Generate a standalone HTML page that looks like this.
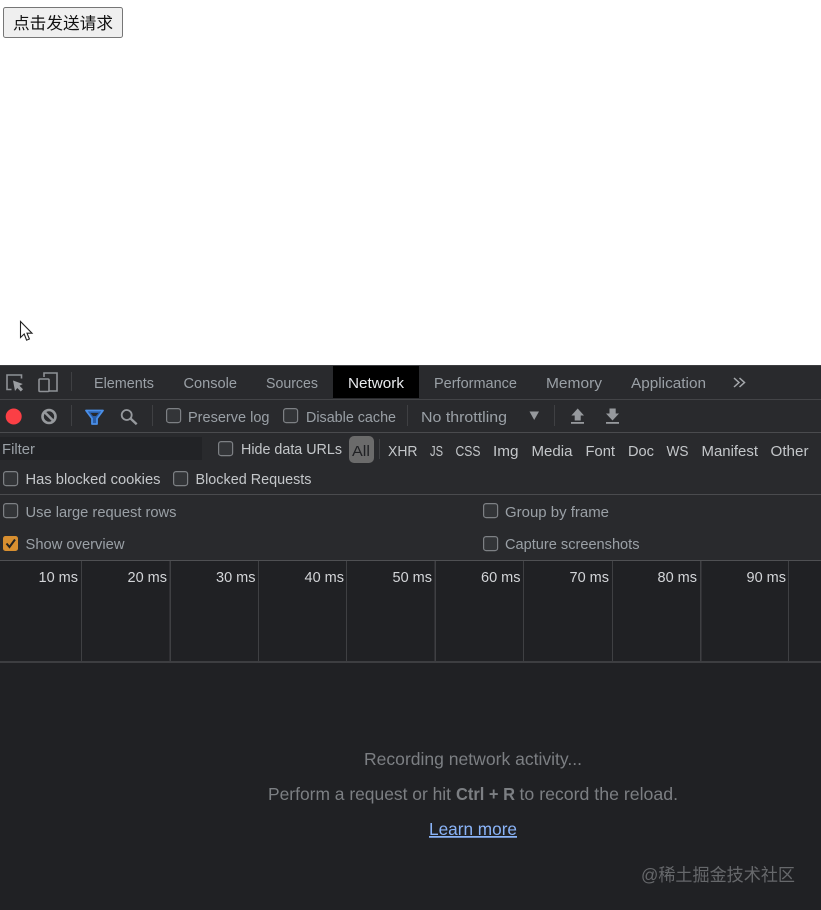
<!DOCTYPE html>
<html lang="zh">
<head>
<meta charset="utf-8">
<title>Network</title>
<style>
html,body{margin:0;padding:0;width:821px;height:910px;overflow:hidden;background:#fff}
svg{position:absolute;left:0;top:0;display:block}
text{font-family:"Liberation Sans","Noto Sans CJK SC",sans-serif;font-size:14.5px}
.t{fill:#9aa0a6}
.l{fill:#c4c7ca}
.s{fill:#b9bcbf}
.b{font-size:17.5px;fill:#7c7f83}
.cb{fill:#333538;stroke:#7d8084;stroke-width:1.2}
</style>
</head>
<body>
<svg width="821" height="910" viewBox="0 0 821 910" xmlns="http://www.w3.org/2000/svg">
<!-- Button -->
<rect x="3.5" y="7.5" width="119" height="30" rx="2" fill="#efefef" stroke="#767676"/>
<text x="13" y="29" textLength="100" lengthAdjust="spacingAndGlyphs" style="font-size:16.6px" fill="#111">点击发送请求</text>
<!-- Cursor -->
<path d="M20.5 321.5V337.5L24.2 334L26.6 340.2L29.4 339L27 333.2H32Z" fill="#fff" stroke="#222" stroke-width="1.1"/>

<!-- Panel -->
<rect x="0" y="365" width="821" height="545" fill="#292a2d"/>
<rect x="0" y="365" width="821" height="1" fill="#3c3d40"/>
<rect x="0" y="399" width="821" height="1" fill="#434447"/>
<rect x="0" y="432" width="821" height="1" fill="#4a4b4e"/>
<rect x="0" y="494" width="821" height="1" fill="#4a4b4e"/>
<rect x="0" y="560" width="821" height="1" fill="#4f5053"/>

<!-- Tab bar icons -->
<path d="M21.500 378.500V375H7V389.500H11.500" fill="none" stroke="#8e9196" stroke-width="1.600"/>
<path d="M13 380.500L15 391L17.300 388L20.800 391.500L23 389.300L19.500 385.800L22.800 384Z" fill="#9a9da1"/>
<path d="M44 377V373H57V391H49" fill="none" stroke="#8e9196" stroke-width="1.600"/>
<rect x="39" y="379" width="10" height="12.500" rx="1" fill="none" stroke="#8e9196" stroke-width="1.600"/>
<rect x="71" y="372" width="1" height="19" fill="#3f4043"/>

<!-- Tabs -->
<rect x="333" y="366" width="86" height="32" fill="#000"/>
<text class="t" x="94" y="388" textLength="60" lengthAdjust="spacingAndGlyphs">Elements</text>
<text class="t" x="183.500" y="388" textLength="53.500" lengthAdjust="spacingAndGlyphs">Console</text>
<text class="t" x="266" y="388" textLength="52" lengthAdjust="spacingAndGlyphs">Sources</text>
<text x="348" y="388" textLength="56" lengthAdjust="spacingAndGlyphs" fill="#e8eaed">Network</text>
<text class="t" x="434" y="388" textLength="83" lengthAdjust="spacingAndGlyphs">Performance</text>
<text class="t" x="546" y="388" textLength="56" lengthAdjust="spacingAndGlyphs">Memory</text>
<text class="t" x="631" y="388" textLength="75" lengthAdjust="spacingAndGlyphs">Application</text>
<path d="M734 378L739 382.500L734 387M739.500 378L744.500 382.500L739.500 387" fill="none" stroke="#a5a8ac" stroke-width="1.500"/>

<!-- Toolbar -->
<circle cx="13.700" cy="416.500" r="8" fill="#fb3f45"/>
<circle cx="49" cy="416.500" r="6.500" fill="none" stroke="#96999d" stroke-width="2.600"/>
<path d="M44.500 412L53.500 421" stroke="#96999d" stroke-width="2.600"/>
<rect x="71" y="405" width="1" height="21" fill="#3f4043"/>
<path d="M86 410.500H103L97 418.500V424H92V418.500Z" fill="#2a5ea8" stroke="#4a8fe8" stroke-width="1.800" stroke-linejoin="round"/>
<path d="M90.500 413H98.500L96 416H93Z" fill="#292a2d"/>
<circle cx="126.700" cy="415" r="5" fill="none" stroke="#96999d" stroke-width="1.800"/>
<path d="M130.500 418.500L136.700 424.300" stroke="#96999d" stroke-width="2.400"/>
<rect x="152" y="405" width="1" height="21" fill="#3f4043"/>
<rect class="cb" x="166.600" y="408.600" width="14" height="14" rx="2.500"/>
<text class="t" x="188" y="422" textLength="81.500" lengthAdjust="spacingAndGlyphs">Preserve log</text>
<rect class="cb" x="283.600" y="408.600" width="14" height="14" rx="2.500"/>
<text class="t" x="306" y="422" textLength="90" lengthAdjust="spacingAndGlyphs">Disable cache</text>
<rect x="407" y="405" width="1" height="21" fill="#3f4043"/>
<text class="t" x="421" y="422" textLength="86" lengthAdjust="spacingAndGlyphs">No throttling</text>
<path d="M529.500 411.500H539L534.200 420Z" fill="#96999d"/>
<rect x="554" y="405" width="1" height="21" fill="#3f4043"/>
<path d="M577.700 408.500L584 415.500H580.700V420.500H574.700V415.500H571.400Z" fill="#96999d"/>
<rect x="571" y="422" width="13" height="1.800" fill="#96999d"/>
<path d="M612.500 420.500L619 413.500H615.700V408.500H609.500V413.500H606Z" fill="#96999d"/>
<rect x="606" y="422" width="13" height="1.800" fill="#96999d"/>

<!-- Filter row -->
<rect x="0" y="437" width="202" height="23" fill="#222326"/>
<text class="t" x="2" y="454" textLength="33" lengthAdjust="spacingAndGlyphs">Filter</text>
<rect class="cb" x="218.600" y="441.600" width="14" height="14" rx="2.500"/>
<text class="l" x="241" y="454" textLength="101" lengthAdjust="spacingAndGlyphs">Hide data URLs</text>
<rect x="349" y="436" width="25" height="27" rx="5" fill="#6b6b6b"/>
<text x="352" y="456" textLength="18" lengthAdjust="spacingAndGlyphs" fill="#202124">All</text>
<rect x="379" y="439" width="1" height="20" fill="#3f4043"/>
<text class="l" x="388" y="456" textLength="29.500" lengthAdjust="spacingAndGlyphs">XHR</text>
<text class="l" x="430" y="456" textLength="13" lengthAdjust="spacingAndGlyphs">JS</text>
<text class="l" x="455.500" y="456" textLength="25" lengthAdjust="spacingAndGlyphs">CSS</text>
<text class="l" x="493" y="456" textLength="25.500" lengthAdjust="spacingAndGlyphs">Img</text>
<text class="l" x="531.500" y="456" textLength="41" lengthAdjust="spacingAndGlyphs">Media</text>
<text class="l" x="585.500" y="456" textLength="29.500" lengthAdjust="spacingAndGlyphs">Font</text>
<text class="l" x="628" y="456" textLength="26" lengthAdjust="spacingAndGlyphs">Doc</text>
<text class="l" x="666.500" y="456" textLength="22" lengthAdjust="spacingAndGlyphs">WS</text>
<text class="l" x="701.500" y="456" textLength="56.500" lengthAdjust="spacingAndGlyphs">Manifest</text>
<text class="l" x="770.500" y="456" textLength="38" lengthAdjust="spacingAndGlyphs">Other</text>

<!-- Blocked row -->
<rect class="cb" x="3.600" y="471.600" width="14" height="14" rx="2.500"/>
<text class="l" x="25.500" y="484" textLength="135" lengthAdjust="spacingAndGlyphs">Has blocked cookies</text>
<rect class="cb" x="173.600" y="471.600" width="14" height="14" rx="2.500"/>
<text class="l" x="195.500" y="484" textLength="116" lengthAdjust="spacingAndGlyphs">Blocked Requests</text>

<!-- Settings -->
<rect class="cb" x="3.600" y="503.600" width="14" height="14" rx="2.500"/>
<text class="t" x="25.500" y="517" textLength="151" lengthAdjust="spacingAndGlyphs">Use large request rows</text>
<rect x="3" y="536" width="15" height="15" rx="2.500" fill="#d88f30"/>
<path d="M6.500 543.500L9.500 547L15 539.500" fill="none" stroke="#222" stroke-width="2"/>
<text class="t" x="25.500" y="549" textLength="99" lengthAdjust="spacingAndGlyphs">Show overview</text>
<rect class="cb" x="483.600" y="503.600" width="14" height="14" rx="2.500"/>
<text class="t" x="505" y="517" textLength="104" lengthAdjust="spacingAndGlyphs">Group by frame</text>
<rect class="cb" x="483.600" y="536.600" width="14" height="14" rx="2.500"/>
<text class="t" x="505" y="549" textLength="134.500" lengthAdjust="spacingAndGlyphs">Capture screenshots</text>

<!-- Timeline -->
<rect x="0" y="561" width="821" height="349" fill="#202124"/>
<rect x="0" y="661" width="821" height="2" fill="#3d3e41"/>
<g fill="#3f4043">
<rect x="81" y="561" width="1" height="100"/>
<rect x="169.500" y="561" width="1.500" height="100"/>
<rect x="258" y="561" width="1" height="100"/>
<rect x="346" y="561" width="1" height="100"/>
<rect x="434.500" y="561" width="1.500" height="100"/>
<rect x="523" y="561" width="1" height="100"/>
<rect x="612" y="561" width="1" height="100"/>
<rect x="700" y="561" width="1.500" height="100"/>
<rect x="788" y="561" width="1" height="100"/>
</g>
<g fill="#d3d5d8" text-anchor="end">
<text x="78" y="582">10 ms</text>
<text x="167" y="582">20 ms</text>
<text x="255.500" y="582">30 ms</text>
<text x="344" y="582">40 ms</text>
<text x="432" y="582">50 ms</text>
<text x="520.500" y="582">60 ms</text>
<text x="609" y="582">70 ms</text>
<text x="697" y="582">80 ms</text>
<text x="786" y="582">90 ms</text>
</g>

<!-- Empty state -->
<text class="b" x="364" y="765" textLength="218" lengthAdjust="spacingAndGlyphs">Recording network activity...</text>
<text class="b" x="268" y="800" textLength="183" lengthAdjust="spacingAndGlyphs">Perform a request or hit</text>
<text class="b" x="456" y="800" textLength="59" lengthAdjust="spacingAndGlyphs" font-weight="bold">Ctrl + R</text>
<text class="b" x="519.500" y="800" textLength="158.500" lengthAdjust="spacingAndGlyphs">to record the reload.</text>
<text x="429" y="835" textLength="88" lengthAdjust="spacingAndGlyphs" fill="#8ab4f8" text-decoration="underline" style="font-size:17.5px">Learn more</text>

<!-- Watermark -->
<text x="641" y="881" textLength="154" lengthAdjust="spacingAndGlyphs" fill="#66686b" style="font-size:17.5px">@稀土掘金技术社区</text>
</svg>
</body>
</html>
